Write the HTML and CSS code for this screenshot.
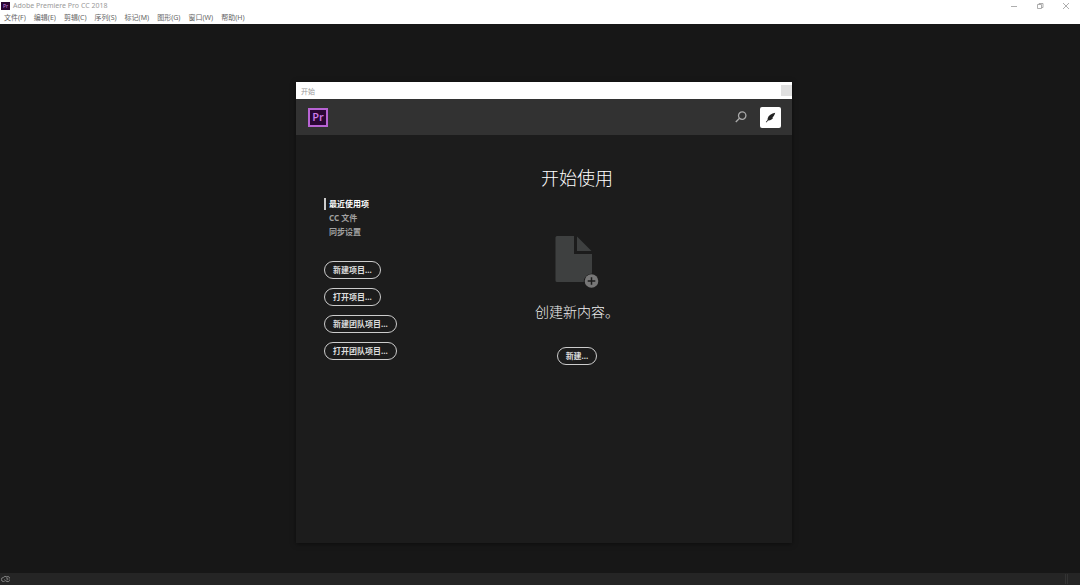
FILE: index.html
```
<!DOCTYPE html>
<html lang="zh-CN">
<head>
  <meta charset="UTF-8" />
  <meta name="viewport" content="width=device-width, initial-scale=1.0" />
  <title>Adobe Premiere Pro CC 2018</title>
  <link rel="stylesheet" href="styles.css">
</head>
<body>
  <header class="app-header">
    <div class="titlebar">
      <span class="app-icon">Pr</span>
      <h1>Adobe Premiere Pro CC 2018</h1>
      <div class="window-controls">
        <button type="button" aria-label="最小化"><svg width="8" height="8" viewBox="0 0 8 8"><path d="M1 4.5h6" /></svg></button>
        <button type="button" aria-label="还原"><svg width="8" height="8" viewBox="0 0 8 8"><path d="M1.5 2.5h4v4h-4zM3 2.5v-1h4v4H5.5" /></svg></button>
        <button type="button" aria-label="关闭"><svg width="8" height="8" viewBox="0 0 8 8"><path d="M1 1l6 6M7 1L1 7" /></svg></button>
      </div>
    </div>
    <nav class="menubar">
      <a href="#">文件(F)</a>
      <a href="#">编辑(E)</a>
      <a href="#">剪辑(C)</a>
      <a href="#">序列(S)</a>
      <a href="#">标记(M)</a>
      <a href="#">图形(G)</a>
      <a href="#">窗口(W)</a>
      <a href="#">帮助(H)</a>
    </nav>
  </header>

  <main class="workspace">
    <section class="dialog">
      <div class="dialog-title">
        <span>开始</span>
        <button type="button" class="dialog-close" aria-label="关闭"></button>
      </div>
      <div class="dialog-bar">
        <span class="logo">Pr</span>
        <button type="button" class="btn-search" aria-label="搜索">
          <svg width="12" height="12" viewBox="0 0 12 12"><circle cx="7.2" cy="4.6" r="3.7" /><path d="M4.5 7.3L.8 11" /></svg>
        </button>
        <button type="button" class="avatar" aria-label="帐户">
          <svg width="11" height="11" viewBox="0 0 11 11"><path d="M10.2.8C6.500 1.600 3.400 3.500 2.700 6.200l-.2 1.700L.8 9.900l.5.500 1.900-1.900c2.900-.3 4.300-1.500 4.900-2.800l-.9.100C8.800 4.600 9.600 2.700 10.200.8z" /></svg>
        </button>
      </div>
      <div class="dialog-body">
        <aside class="sidebar">
          <nav class="tabs">
            <a href="#" class="active">最近使用项</a>
            <a href="#">CC 文件</a>
            <a href="#">同步设置</a>
          </nav>
          <div class="actions">
            <button type="button" class="pill">新建项目...</button>
            <button type="button" class="pill">打开项目...</button>
            <button type="button" class="pill">新建团队项目...</button>
            <button type="button" class="pill">打开团队项目...</button>
          </div>
        </aside>
        <div class="start">
          <h2>开始使用</h2>
          <svg class="doc-icon" width="44" height="52" viewBox="0 0 44 52">
            <path class="sheet" d="M2 0h17v18h18v19.500a8.500 8.500 0 0 0-8.300 8.500H2a1.500 1.500 0 0 1-1.500-1.500v-43A1.500 1.500 0 0 1 2 0z" />
            <path class="sheet" d="M22 .5L36.500 15H22z" />
            <circle cx="36.500" cy="45" r="6.800" />
            <path class="plus" d="M36.500 41.200v7.600M32.700 45h7.600" />
          </svg>
          <p>创建新内容。</p>
          <button type="button" class="pill">新建...</button>
        </div>
      </div>
    </section>
  </main>

  <footer class="statusbar">
    <svg width="9" height="8" viewBox="0 0 9 8"><path d="M3.500 6.500h-1a2 2 0 0 1-.2-4 2.600 2.600 0 0 1 3.500-.7 2.500 2.500 0 1 1 .2 4.700C4.800 6.500 4 5.500 3.500 4.500M5 3.500a1 1 0 1 1 .5 1.500" /></svg>
    <span class="grip"></span>
  </footer>
</body>
</html>
```
FILE: styles.css
```
* {
  box-sizing: border-box;
}
body {
  display: flex;
  flex-direction: column;
  min-height: 100vh;
  margin: 0;
  background: #171717;
  color: #ddd;
  font-family: "Noto Sans", "Noto Sans CJK SC", sans-serif;
  font-size: 8px;
}
h1, h2, p {
  margin: 0;
  font-weight: normal;
}
a {
  color: inherit;
  text-decoration: none;
}
button {
  padding: 0;
  border: none;
  background: none;
  color: inherit;
  font: inherit;
  cursor: pointer;
}
svg {
  display: block;
  fill: none;
}

/* main window */
.app-header {
  background: #fff;
  height: 24px;
  font-size: 7px;
  line-height: 12px;
}
.titlebar {
  display: flex;
  align-items: center;
  height: 12px;
  padding: 0 10px 0 1px;
}
.titlebar h1 {
  flex: 1;
  margin-left: 3px;
  color: #999;
  font-size: 7px;
}
.app-icon {
  width: 9px;
  height: 8px;
  background: #2a0634;
  color: #d28be8;
  font-size: 5px;
  line-height: 8px;
  text-align: center;
}
.window-controls {
  display: flex;
  gap: 18px;
}
.window-controls svg {
  stroke: #999;
  stroke-width: .8;
}
.menubar {
  display: flex;
  gap: 8px;
  padding-left: 4px;
  color: #666;
}
.workspace {
  flex: 1;
  padding: 58px 0 30px 8px;
}

/* start dialog */
.dialog {
  width: 496px;
  max-width: 100%;
  margin: 0 auto;
  background: #1c1c1c;
  box-shadow: 0 1px 5px rgba(0,0,0,0.5);
}
.dialog-title {
  display: flex;
  align-items: center;
  justify-content: space-between;
  height: 17px;
  padding-left: 5px;
  background: #fff;
  color: #999;
  font-size: 7px;
}
.dialog-close {
  width: 11px;
  height: 11px;
  background: #e0e0e0;
}
.dialog-bar {
  display: flex;
  align-items: center;
  height: 36px;
  padding: 0 11px 0 12px;
  background: #323232;
}
.logo {
  width: 20px;
  height: 19px;
  border: 2px solid #b863d4;
  background: #2a0634;
  color: #cf7bea;
  font-family: "Open Sans", sans-serif;
  font-size: 11px;
  font-weight: 600;
  line-height: 14px;
  text-align: center;
}
.btn-search {
  margin-left: auto;
}
.btn-search svg {
  stroke: #aaa;
  stroke-width: 1.3;
}
.avatar {
  display: flex;
  align-items: center;
  justify-content: center;
  width: 21px;
  height: 21px;
  margin-left: 13px;
  border-radius: 2px;
  background: #fff;
}
.avatar svg {
  fill: #222;
}
.dialog-body {
  display: grid;
  grid-template-columns: 136px 1fr;
  min-height: 408px;
  padding-right: 70px;
}
.sidebar {
  padding: 63px 0 0 28px;
}
.tabs {
  display: flex;
  flex-direction: column;
  gap: 2px;
  color: #a0a0a0;
  font-weight: bold;
  line-height: 12px;
}
.tabs a {
  border-left: 2px solid transparent;
  padding-left: 3px;
}
.tabs .active {
  border-color: #ccc;
  color: #fff;
}
.actions {
  display: flex;
  flex-direction: column;
  align-items: flex-start;
  gap: 9px;
  margin-top: 23px;
}
.pill {
  height: 18px;
  padding: 0 8px;
  border: 1px solid #ccc;
  border-radius: 9px;
  color: #ddd;
  font-weight: bold;
  line-height: 16px;
  white-space: nowrap;
}
.start {
  display: flex;
  flex-direction: column;
  align-items: center;
  padding-top: 31px;
}
.start h2 {
  color: #fff;
  font-size: 18px;
  font-weight: 300;
  line-height: 24px;
}
.doc-icon {
  margin-top: 46px;
}
.doc-icon .sheet {
  fill: #3e4040;
}
.doc-icon circle {
  fill: #777;
}
.doc-icon .plus {
  stroke: #1c1c1c;
  stroke-width: 1.5;
}
.start p {
  margin: 14px 0 25px;
  color: #f0f0f0;
  font-size: 14px;
  font-weight: 300;
  line-height: 20px;
}

.statusbar {
  display: flex;
  align-items: center;
  justify-content: space-between;
  height: 12px;
  padding: 0 12px 0 1px;
  background: #252525;
}
.statusbar svg {
  stroke: #999;
  stroke-width: .8;
}
.grip {
  width: 3px;
  height: 10px;
  border-left: 1px solid #333;
  border-right: 1px solid #333;
}
```
